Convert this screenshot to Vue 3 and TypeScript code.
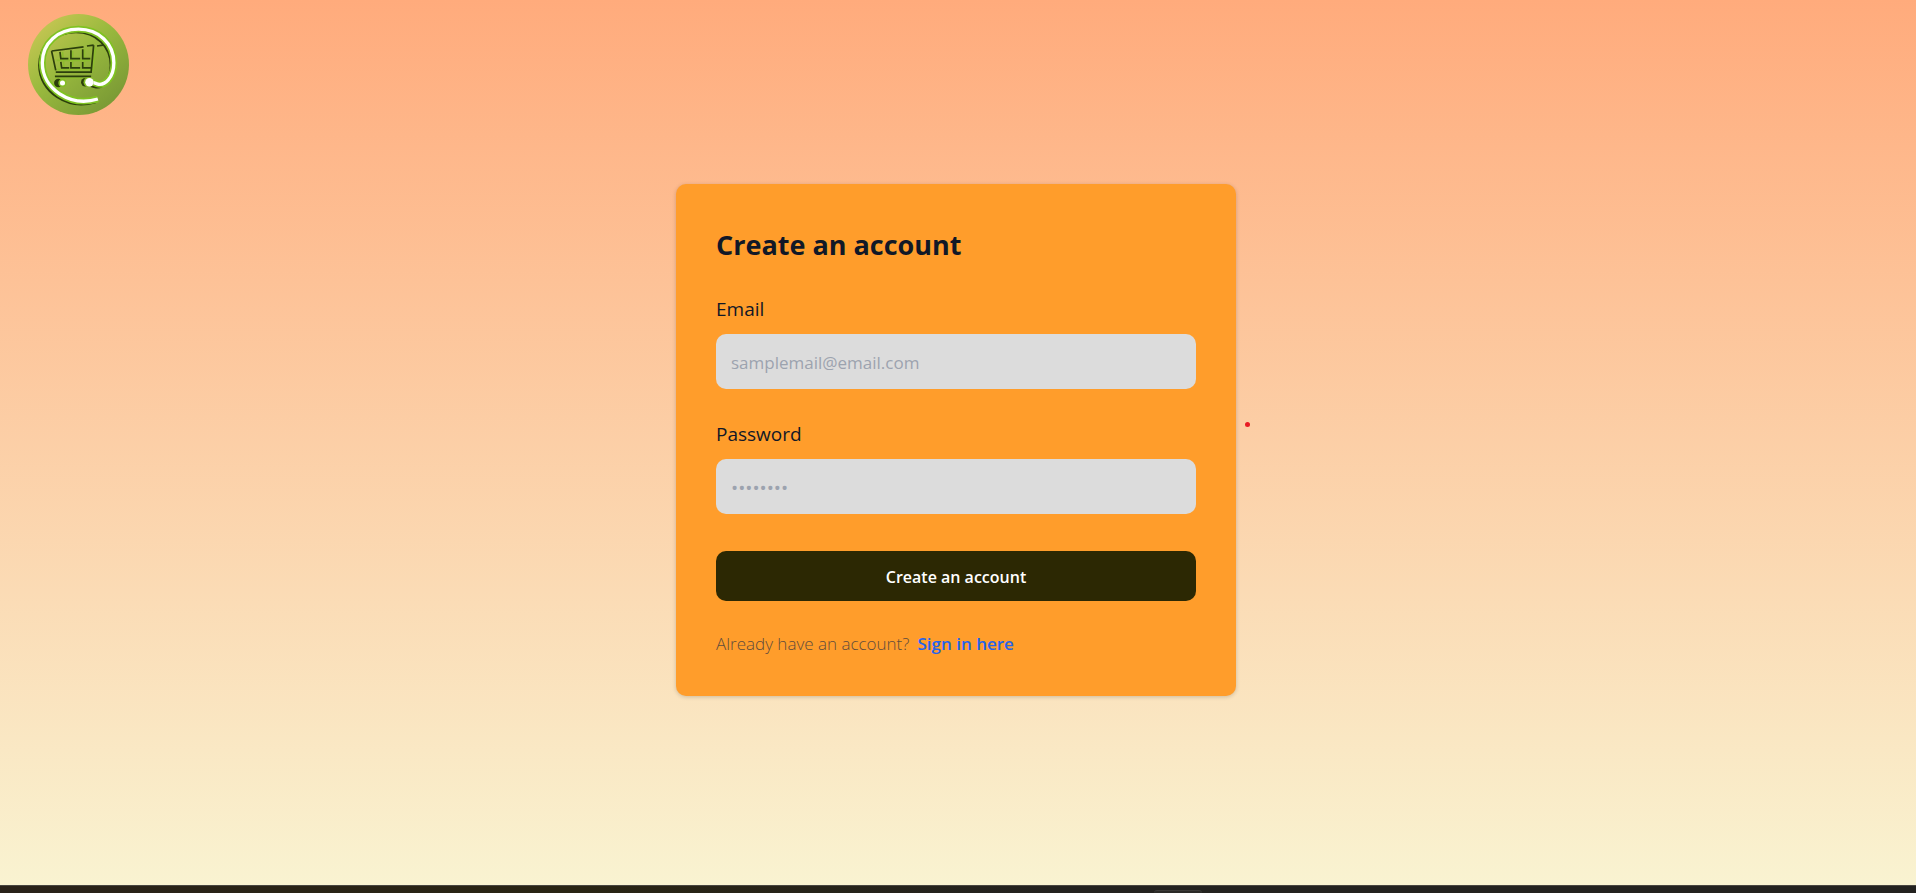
<script setup lang="ts">
import { ref } from 'vue'

const email = ref('')
const password = ref('')
</script>

<template>
  <div class="screen">
    <div class="page">
      <header class="header">
        <a class="logo" href="#" aria-label="Home">
          <svg viewBox="0 0 120 120" aria-hidden="true">
            <defs>
              <linearGradient id="disc" x1="0.1" y1="0.1" x2="0.8" y2="0.9">
                <stop offset="0" stop-color="#c6c653" />
                <stop offset="0.45" stop-color="#9aba3e" />
                <stop offset="1" stop-color="#7b9b35" />
              </linearGradient>
              <path id="ring" d="M83 101C50 111 17 89 17 58C17 34 36 18 60 18C84 18 102 35 102 58C102 76 91 86 82 83Q78 81 73 81" />
            </defs>
            <circle cx="60" cy="60" r="60" fill="url(#disc)" />
            <g fill="none">
              <use href="#ring" stroke="#2c3f0c" stroke-width="4" transform="translate(-3 3)" />
              <use href="#ring" stroke="#7fc322" stroke-width="8" />
              <use href="#ring" stroke="#ffffff" stroke-width="4" />
            </g>
            <g fill="none" stroke="#8dbd2f" stroke-width="2">
              <path d="M80 40L77 68M34 55H77M35 66H76M41 45L43 65M53 44V65M67 42V65M33 76H77" />
            </g>
            <g fill="none" stroke="#2c3f0c" stroke-width="2">
              <path d="M28 44L66 39M70 38L78 37M82 38L89 37M28 44L33 67M33 69H76M32 74H75M38 45L39 53H48M51 43V53H62M65 42V53H74M39 57L40 64H49M51 57V64H62M65 57V64H75M78 37L75 69" />
            </g>
            <g fill="#2c3f0c">
              <circle cx="36" cy="82" r="5" /><circle cx="68" cy="81" r="5" />
            </g>
            <g fill="#83bd25">
              <circle cx="41" cy="82" r="5" /><circle cx="72" cy="81" r="6" />
            </g>
            <g fill="#ffffff">
              <circle cx="41" cy="82" r="3" /><circle cx="73" cy="81" r="5" />
            </g>
          </svg>
        </a>
      </header>

      <main class="main">
        <section class="card">
          <h1 class="title">Create an account</h1>
          <form class="form" @submit.prevent>
            <div class="field">
              <label for="email">Email</label>
              <input id="email" v-model="email" type="email" placeholder="samplemail@email.com" />
            </div>
            <div class="field">
              <label for="password">Password</label>
              <input id="password" v-model="password" type="password" placeholder="••••••••" />
            </div>
            <button class="submit" type="submit">Create an account</button>
            <p class="signin">
              <span>Already have an account?</span>
              <a href="#">Sign in here</a>
            </p>
          </form>
          <span class="marker"></span>
        </section>
      </main>
    </div>
    <footer class="strip"><span class="tab"></span></footer>
  </div>
</template>

<style>
body {
  margin: 0;
}
</style>

<style scoped>
.screen {
  display: flex;
  flex-direction: column;
  min-height: 100vh;
  font-family: "Open Sans", "Noto Sans", sans-serif;
  color: #111827;
}

.screen *,
.screen {
  box-sizing: border-box;
}

.page {
  flex: 1;
  background: linear-gradient(#ffab7c, #f9f3d1);
}

.header {
  display: flex;
  padding: 14px 28px 0;
}

.logo,
.logo svg {
  display: block;
  width: 101px;
  height: 101px;
}

.main {
  display: flex;
  justify-content: center;
  padding: 69px 4px 40px 0;
}

.card {
  position: relative;
  width: 100%;
  max-width: 560px;
  padding: 40px;
  border-radius: 10px;
  background: #ff9d2b;
  box-shadow: 0 1px 4px rgba(0, 0, 0, 0.18);
}

.title {
  margin: 0 0 28px;
  font-size: 27px;
  line-height: 42px;
  font-weight: 700;
}

.form {
  display: flex;
  flex-direction: column;
  gap: 30px;
}

.field {
  display: flex;
  flex-direction: column;
  gap: 10px;
}

.field label {
  font-size: 19px;
  line-height: 30px;
  font-weight: 500;
}

.field input {
  width: 100%;
  height: 55px;
  padding: 2px 15px 0;
  border: 0;
  border-radius: 10px;
  background: #dcdcdc;
  font: inherit;
  font-size: 17px;
  color: #111827;
}

.field input[type="password"] {
  font-size: 19px;
}

.field input::placeholder {
  color: #9ca3af;
  opacity: 1;
}

.submit {
  height: 50px;
  margin-top: 7px;
  padding: 2px 0 0;
  border: 0;
  border-radius: 10px;
  background: #2c2803;
  color: #ffffff;
  font: inherit;
  font-size: 16px;
  font-weight: 600;
  cursor: pointer;
}

.signin {
  display: flex;
  gap: 8px;
  margin: 0;
  font-size: 17px;
  line-height: 25px;
  font-weight: 300;
  color: #5f4c3c;
}

.signin a {
  color: #2563eb;
  font-weight: 600;
  text-decoration: none;
}

.marker {
  position: absolute;
  top: 238px;
  right: -14px;
  width: 5px;
  height: 5px;
  border-radius: 50%;
  background: #e81c24;
}

.strip {
  display: flex;
  justify-content: center;
  height: 8px;
  padding: 4px 0 0 23%;
  border-top: 1px solid #484640;
  background: linear-gradient(90deg, #292219, #292413 30%, #23221f 55%, #23221f);
}

.tab {
  width: 48px;
  border-top: 1px solid #3b3a37;
  border-radius: 4px 4px 0 0;
  background: #2b2a27;
}
</style>
